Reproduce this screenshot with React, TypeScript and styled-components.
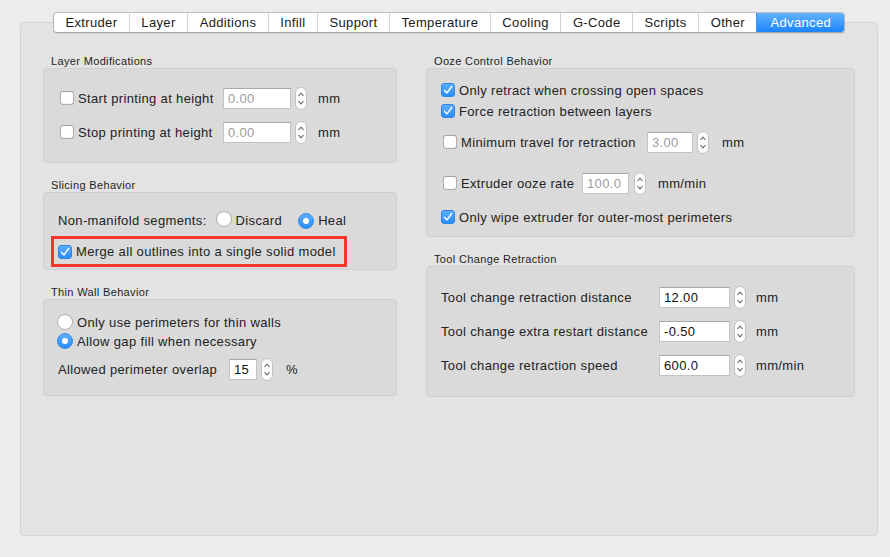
import styled, { createGlobalStyle, css } from "styled-components";

const GlobalStyle = createGlobalStyle`
  html, body {
    margin: 0;
    padding: 0;
    background: #ececec;
  }
  body {
    font-family: "Liberation Sans", Arial, sans-serif;
    font-size: 13px;
    letter-spacing: 0.35px;
    color: #222;
  }
`;

const TABS = [
  "Extruder",
  "Layer",
  "Additions",
  "Infill",
  "Support",
  "Temperature",
  "Cooling",
  "G-Code",
  "Scripts",
  "Other",
  "Advanced",
];

const Window = styled.div`
  width: 890px;
  height: 557px;
  box-sizing: border-box;
  padding: 12px 12px 0 20px;
`;

const TabBar = styled.div`
  position: relative;
  z-index: 1;
  display: flex;
  justify-content: center;
  margin-bottom: -11px;
`;

const TabStrip = styled.div`
  display: flex;
  height: 19px;
  background: #fff;
  border: 1px solid #b4b4b4;
  border-top-color: #c4c4c4;
  border-bottom-color: #a8a8a8;
  border-radius: 4px;
  overflow: hidden;
  box-shadow: 0 0.5px 1px rgba(0, 0, 0, 0.08);
`;

const Tab = styled.div<{ $active?: boolean; $first?: boolean }>`
  padding: 0 11.5px;
  line-height: 19px;
  font-size: 13px;
  color: #1a1a1a;
  white-space: nowrap;
  border-left: ${({ $first }) => ($first ? "none" : "1px solid #d4d4d4")};
  ${({ $active }) =>
    $active &&
    css`
      color: #fff;
      border-left-color: #3a92fb;
      padding: 0 13px;
      background: linear-gradient(#62b2fd, #1c85fb);
    `}
`;

const Panel = styled.div`
  height: 514px;
  box-sizing: border-box;
  background: #e3e3e3;
  border: 1px solid #d4d4d4;
  border-radius: 4px;
  padding: 31px 0 0 22px;
  display: flex;
  gap: 29px;
  align-items: flex-start;
`;

const Column = styled.div<{ $width: number }>`
  width: ${({ $width }) => $width}px;
  display: flex;
  flex-direction: column;
  gap: 15px;
`;

const Group = styled.div`
  display: flex;
  flex-direction: column;
`;

const GroupTitle = styled.div`
  font-size: 11px;
  line-height: 14px;
  height: 14px;
  padding-left: 8px;
  color: #1e1e1e;
`;

const GroupBox = styled.div<{ $pad: string }>`
  background: #dadada;
  border: 1px solid #cfcfcf;
  border-radius: 4px;
  padding: ${({ $pad }) => $pad};
  display: flex;
  flex-direction: column;
`;

const Row = styled.div<{ $h?: number; $mt?: number; $indent?: number }>`
  display: flex;
  align-items: center;
  height: ${({ $h }) => $h ?? 22}px;
  margin-top: ${({ $mt }) => $mt ?? 0}px;
  padding-left: ${({ $indent }) => $indent ?? 0}px;
  white-space: nowrap;
`;

const Label = styled.span<{ $width?: number; $gap?: number }>`
  display: inline-block;
  margin-left: ${({ $gap }) => $gap ?? 0}px;
  ${({ $width }) => $width !== undefined && `width: ${$width}px;`}
  flex-shrink: 0;
`;

const Highlight = styled.div`
  display: flex;
  align-items: center;
  width: 296px;
  height: 31px;
  box-sizing: border-box;
  margin-top: 6px;
  border: 3px solid #f2362c;
  padding-left: 4px;
  white-space: nowrap;
`;

const CheckBoxShell = styled.span<{ $on?: boolean }>`
  display: inline-flex;
  align-items: center;
  justify-content: center;
  width: 14px;
  height: 14px;
  box-sizing: border-box;
  border-radius: 3px;
  flex-shrink: 0;
  ${({ $on }) =>
    $on
      ? css`
          background: linear-gradient(#5eaefd, #2a8cfb);
          border: 1px solid #2f86e8;
        `
      : css`
          background: #fff;
          border: 1px solid #adadad;
          border-top-color: #a0a0a0;
          box-shadow: inset 0 -1px 0 #f2f2f2;
        `}
`;

const RadioShell = styled.span<{ $on?: boolean }>`
  display: inline-flex;
  align-items: center;
  justify-content: center;
  width: 16px;
  height: 16px;
  box-sizing: border-box;
  border-radius: 50%;
  flex-shrink: 0;
  ${({ $on }) =>
    $on
      ? css`
          background: linear-gradient(#5eaefd, #2a8cfb);
          border: 1px solid #2f86e8;
        `
      : css`
          background: #fff;
          border: 1px solid #adadad;
        `}
`;

const RadioDot = styled.span`
  width: 6px;
  height: 6px;
  border-radius: 50%;
  background: #fff;
`;

const Field = styled.div<{ $width: number; $disabled?: boolean }>`
  width: ${({ $width }) => $width}px;
  height: 21px;
  box-sizing: border-box;
  background: #fff;
  border: 1px solid #c3c3c3;
  border-top-color: #a9a9a9;
  padding-left: 4px;
  line-height: 19px;
  font-size: 13px;
  color: ${({ $disabled }) => ($disabled ? "#9c9c9c" : "#111")};
  flex-shrink: 0;
`;

const StepperBox = styled.span<{ $gap: number }>`
  display: inline-flex;
  margin-left: ${({ $gap }) => $gap}px;
  flex-shrink: 0;
`;

const Unit = styled.span<{ $gap: number }>`
  margin-left: ${({ $gap }) => $gap}px;
`;

function CheckBox({ on }: { on?: boolean }) {
  return (
    <CheckBoxShell $on={on}>
      {on && (
        <svg width="10" height="10" viewBox="0 0 10 10">
          <path
            d="M1.6 5.4 L4 7.9 L8.6 1.6"
            fill="none"
            stroke="#fff"
            strokeWidth="1.5"
            strokeLinecap="round"
            strokeLinejoin="round"
          />
        </svg>
      )}
    </CheckBoxShell>
  );
}

function Radio({ on }: { on?: boolean }) {
  return <RadioShell $on={on}>{on && <RadioDot />}</RadioShell>;
}

function Stepper({ gap }: { gap: number }) {
  return (
    <StepperBox $gap={gap}>
      <svg width="12" height="23" viewBox="0 0 12 23">
        <rect
          x="0.5"
          y="0.5"
          width="11"
          height="22"
          rx="5.5"
          fill="#fcfcfc"
          stroke="#c2c2c2"
        />
        <path
          d="M3.8 8.6 L6 6.2 L8.2 8.6"
          fill="none"
          stroke="#6f6f6f"
          strokeWidth="1.1"
          strokeLinecap="round"
          strokeLinejoin="round"
        />
        <path
          d="M3.8 14.4 L6 16.8 L8.2 14.4"
          fill="none"
          stroke="#6f6f6f"
          strokeWidth="1.1"
          strokeLinecap="round"
          strokeLinejoin="round"
        />
      </svg>
    </StepperBox>
  );
}

type NumberInputProps = {
  value: string;
  width: number;
  disabled?: boolean;
  stepGap: number;
  unit: string;
  unitGap: number;
};

function NumberInput({ value, width, disabled, stepGap, unit, unitGap }: NumberInputProps) {
  return (
    <>
      <Field $width={width} $disabled={disabled}>
        {value}
      </Field>
      <Stepper gap={stepGap} />
      <Unit $gap={unitGap}>{unit}</Unit>
    </>
  );
}

export default function App() {
  return (
    <>
      <GlobalStyle />
      <Window>
        <TabBar>
          <TabStrip>
            {TABS.map((t, i) => (
              <Tab key={t} $first={i === 0} $active={t === "Advanced"}>
                {t}
              </Tab>
            ))}
          </TabStrip>
        </TabBar>

        <Panel>
          <Column $width={354}>
            <Group>
              <GroupTitle>Layer Modifications</GroupTitle>
              <GroupBox $pad="19px 0 20px 16px">
                <Row $h={20}>
                  <CheckBox />
                  <Label $gap={4} $width={145}>Start printing at height</Label>
                  <NumberInput value="0.00" width={68} disabled stepGap={4} unit="mm" unitGap={11} />
                </Row>
                <Row $h={20} $mt={14}>
                  <CheckBox />
                  <Label $gap={4} $width={145}>Stop printing at height</Label>
                  <NumberInput value="0.00" width={68} disabled stepGap={4} unit="mm" unitGap={11} />
                </Row>
              </GroupBox>
            </Group>

            <Group>
              <GroupTitle>Slicing Behavior</GroupTitle>
              <GroupBox $pad="17px 0 2px 7px">
                <Row $h={20} $indent={7}>
                  <Label>Non-manifold segments:</Label>
                  <Label $gap={9}>
                    <Radio />
                  </Label>
                  <Label $gap={4}>Discard</Label>
                  <Label $gap={16}>
                    <Radio on />
                  </Label>
                  <Label $gap={4}>Heal</Label>
                </Row>
                <Highlight>
                  <CheckBox on />
                  <Label $gap={4}>Merge all outlines into a single solid model</Label>
                </Highlight>
              </GroupBox>
            </Group>

            <Group>
              <GroupTitle>Thin Wall Behavior</GroupTitle>
              <GroupBox $pad="13px 0 15px 13px">
                <Row $h={18}>
                  <Radio />
                  <Label $gap={4}>Only use perimeters for thin walls</Label>
                </Row>
                <Row $h={18} $mt={1}>
                  <Radio on />
                  <Label $gap={4}>Allow gap fill when necessary</Label>
                </Row>
                <Row $h={22} $mt={8} $indent={1}>
                  <Label $width={171}>Allowed perimeter overlap</Label>
                  <NumberInput value="15" width={28} stepGap={4} unit="%" unitGap={13} />
                </Row>
              </GroupBox>
            </Group>
          </Column>

          <Column $width={429}>
            <Group>
              <GroupTitle>Ooze Control Behavior</GroupTitle>
              <GroupBox $pad="12px 0 10px 14px">
                <Row $h={18}>
                  <CheckBox on />
                  <Label $gap={4}>Only retract when crossing open spaces</Label>
                </Row>
                <Row $h={18} $mt={3}>
                  <CheckBox on />
                  <Label $gap={4}>Force retraction between layers</Label>
                </Row>
                <Row $h={22} $mt={11} $indent={2}>
                  <CheckBox />
                  <Label $gap={4} $width={186}>Minimum travel for retraction</Label>
                  <NumberInput value="3.00" width={46} disabled stepGap={4} unit="mm" unitGap={13} />
                </Row>
                <Row $h={22} $mt={19} $indent={2}>
                  <CheckBox />
                  <Label $gap={4} $width={121}>Extruder ooze rate</Label>
                  <NumberInput value="100.0" width={47} disabled stepGap={5} unit="mm/min" unitGap={12} />
                </Row>
                <Row $h={18} $mt={14}>
                  <CheckBox on />
                  <Label $gap={4}>Only wipe extruder for outer-most perimeters</Label>
                </Row>
              </GroupBox>
            </Group>

            <Group>
              <GroupTitle>Tool Change Retraction</GroupTitle>
              <GroupBox $pad="19px 0 20px 14px">
                <Row>
                  <Label $width={218}>Tool change retraction distance</Label>
                  <NumberInput value="12.00" width={71} stepGap={4} unit="mm" unitGap={10} />
                </Row>
                <Row $mt={12}>
                  <Label $width={218}>Tool change extra restart distance</Label>
                  <NumberInput value="-0.50" width={71} stepGap={4} unit="mm" unitGap={10} />
                </Row>
                <Row $mt={12}>
                  <Label $width={218}>Tool change retraction speed</Label>
                  <NumberInput value="600.0" width={71} stepGap={4} unit="mm/min" unitGap={10} />
                </Row>
              </GroupBox>
            </Group>
          </Column>
        </Panel>
      </Window>
    </>
  );
}
